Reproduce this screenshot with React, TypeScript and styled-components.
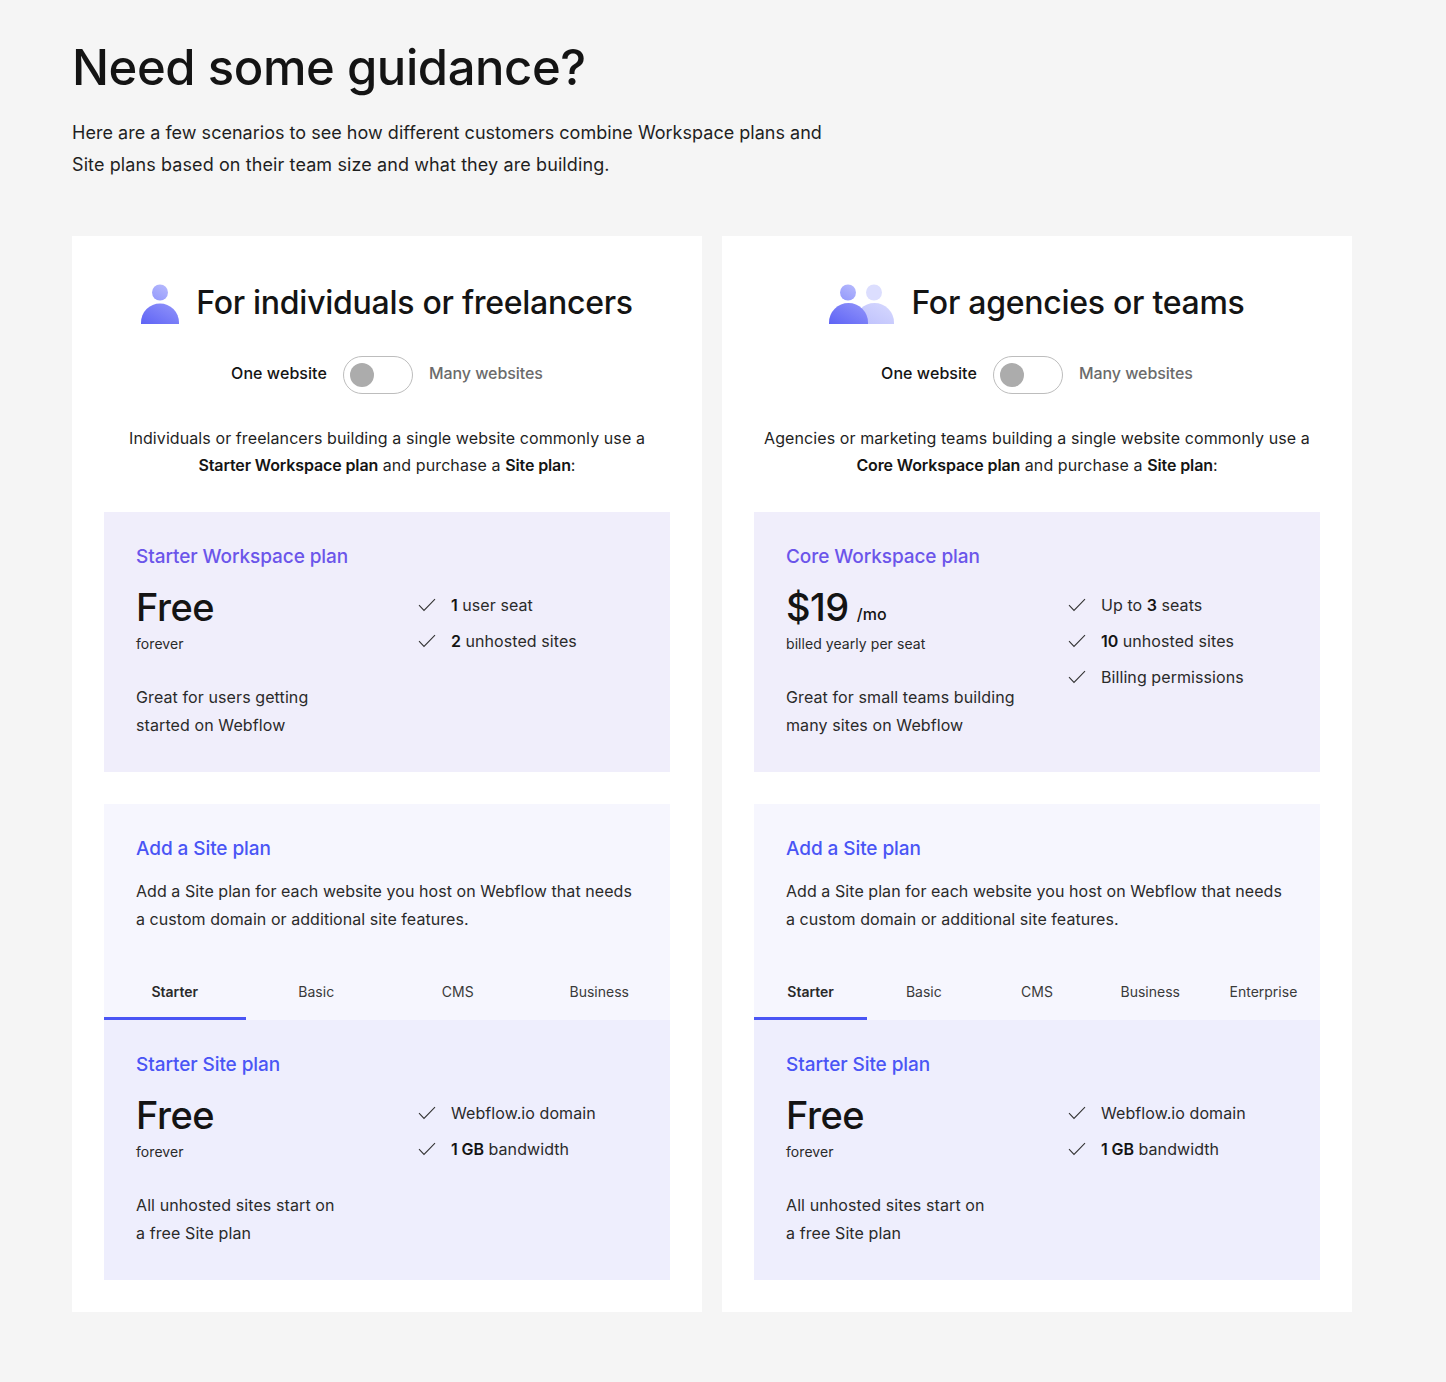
import React from 'react';
import styled, { createGlobalStyle } from 'styled-components';

const GlobalStyle = createGlobalStyle`
  html, body {
    margin: 0;
    padding: 0;
    background: #f5f5f5;
  }
  body {
    font-family: Inter, "Liberation Sans", sans-serif;
    color: #1a1a1a;
  }
`;

const Page = styled.div`
  width: 1446px;
  height: 1382px;
  box-sizing: border-box;
  padding: 37px 94px 0 72px;
`;

const Title = styled.h1`
  margin: 0;
  font-size: 49px;
  line-height: 62px;
  font-weight: 500;
  letter-spacing: -0.44px;
  color: #141414;
`;

const Intro = styled.p`
  margin: 18px 0 0;
  width: 770px;
  font-size: 18px;
  line-height: 32px;
  letter-spacing: 0.02px;
  color: #1f1f1f;
  span {
    letter-spacing: 0.1px;
  }
`;

const Columns = styled.div`
  display: grid;
  grid-template-columns: 630px 630px;
  gap: 20px;
  margin-top: 55px;
`;

const Card = styled.section`
  background: #fff;
  height: 1076px;
  box-sizing: border-box;
  padding: 40px 32px 32px;
`;

const CardHeader = styled.div`
  display: flex;
  justify-content: center;
  align-items: center;
  gap: 17px;
  height: 52px;
  svg {
    margin-top: 4px;
  }
`;

const CardTitle = styled.h2`
  margin: 2px 0 0;
  font-size: 32px;
  line-height: 52px;
  font-weight: 500;
  letter-spacing: -0.27px;
  color: #141414;
`;

const ToggleRow = styled.div`
  display: flex;
  justify-content: center;
  align-items: center;
  gap: 16px;
  margin-top: 28px;
  height: 38px;
`;

const ToggleLabel = styled.span<{ $active?: boolean }>`
  margin-top: -4px;
  font-size: 16px;
  line-height: 24px;
  font-weight: 500;
  letter-spacing: ${(p) => (p.$active ? '0.06px' : '-0.06px')};
  color: ${(p) => (p.$active ? '#141414' : '#6b6b6b')};
`;

const Toggle = styled.div`
  width: 70px;
  height: 38px;
  box-sizing: border-box;
  border: 1px solid #bdbdbd;
  border-radius: 19px;
  padding: 6px;
  background: #fff;
`;

const Knob = styled.div`
  width: 24px;
  height: 24px;
  border-radius: 50%;
  background: #acacac;
`;

const Lead = styled.p`
  margin: 31px 0 0;
  height: 54px;
  font-size: 16px;
  line-height: 27px;
  letter-spacing: 0.09px;
  text-align: center;
  color: #1f1f1f;
  b {
    font-weight: 600;
    letter-spacing: -0.12px;
    color: #141414;
  }
`;

const PlanBox = styled.div<{ $tone: 'violet' | 'blue' }>`
  height: 260px;
  box-sizing: border-box;
  padding: 32px 32px 0;
  background: ${(p) => (p.$tone === 'violet' ? '#f0eefb' : '#eeeefd')};
`;

const TopPlanBox = styled(PlanBox)`
  margin-top: 33px;
`;

const PlanName = styled.h3<{ $tone: 'violet' | 'blue' }>`
  margin: 0;
  font-size: 19px;
  line-height: 26px;
  font-weight: 500;
  letter-spacing: -0.08px;
  color: ${(p) => (p.$tone === 'violet' ? '#6b55ea' : '#4a55f5')};
`;

const PlanGrid = styled.div`
  display: grid;
  grid-template-columns: 282px 1fr;
  margin-top: 13px;
`;

const Price = styled.div`
  font-size: 38px;
  line-height: 48px;
  font-weight: 500;
  letter-spacing: -0.5px;
  color: #141414;
  small {
    margin-left: 8px;
    font-size: 16px;
    line-height: 0;
    letter-spacing: 0;
    font-weight: 500;
    vertical-align: 1px;
  }
`;

const PriceNote = styled.div`
  margin-top: 3px;
  font-size: 14px;
  line-height: 20px;
  letter-spacing: 0.06px;
  color: #2a2a2a;
`;

const Blurb = styled.p`
  margin: 29px 0 0;
  font-size: 16px;
  line-height: 28px;
  letter-spacing: 0.1px;
  color: #2a2a2a;
`;

const Features = styled.ul`
  list-style: none;
  margin: 0;
  padding: 4px 0 0;
`;

const Feature = styled.li`
  display: flex;
  align-items: center;
  gap: 15px;
  height: 36px;
  font-size: 16px;
  letter-spacing: 0.08px;
  color: #2a2a2a;
  b {
    font-weight: 600;
    letter-spacing: -0.1px;
    color: #141414;
  }
`;

const Tick = styled.svg`
  flex: none;
  width: 18px;
  height: 14px;
`;

const SiteBox = styled.div`
  margin-top: 32px;
  height: 216px;
  box-sizing: border-box;
  padding-top: 32px;
  background: #f6f6fe;
  display: flex;
  flex-direction: column;
`;

const SiteIntro = styled.div`
  padding: 0 32px;
`;

const SiteText = styled.p`
  margin: 15px 0 0;
  font-size: 16px;
  line-height: 28px;
  letter-spacing: 0.06px;
  color: #2a2a2a;
`;

const Tabs = styled.div`
  display: flex;
  margin-top: auto;
`;

const Tab = styled.div<{ $active?: boolean }>`
  flex: 1;
  height: 56px;
  box-sizing: border-box;
  padding-top: 18px;
  text-align: center;
  font-size: 14px;
  line-height: 20px;
  font-weight: ${(p) => (p.$active ? 600 : 400)};
  color: ${(p) => (p.$active ? '#2a2a2a' : '#3a3a3a')};
  border-bottom: 3px solid ${(p) => (p.$active ? '#4a55f5' : 'transparent')};
`;

const Check = () => (
  <Tick viewBox="0 0 18 14" fill="none">
    <path d="M1 7.2 L6 12.4 L17 1.2" stroke="#333" strokeWidth="1.1" />
  </Tick>
);

const PersonIcon = () => (
  <svg width="38" height="40" viewBox="0 0 38 40">
    <defs>
      <linearGradient id="solo-head" x1="0.2" y1="1" x2="0.8" y2="0">
        <stop offset="0" stopColor="#959bfb" />
        <stop offset="1" stopColor="#b5b8fd" />
      </linearGradient>
      <linearGradient id="solo-body" x1="0" y1="1" x2="1" y2="0">
        <stop offset="0" stopColor="#5e63f5" />
        <stop offset="1" stopColor="#9396fa" />
      </linearGradient>
    </defs>
    <circle cx="19" cy="8.5" r="8" fill="url(#solo-head)" />
    <path d="M0 40 V38.5 A19 19 0 0 1 38 38.5 V40 Z" fill="url(#solo-body)" />
  </svg>
);

const TeamIcon = () => (
  <svg width="65" height="40" viewBox="0 0 65 40">
    <defs>
      <linearGradient id="team-head" x1="0.2" y1="1" x2="0.8" y2="0">
        <stop offset="0" stopColor="#959bfb" />
        <stop offset="1" stopColor="#b5b8fd" />
      </linearGradient>
      <linearGradient id="team-body" x1="0" y1="1" x2="1" y2="0">
        <stop offset="0" stopColor="#5e63f5" />
        <stop offset="1" stopColor="#9396fa" />
      </linearGradient>
      <linearGradient id="team-back" x1="0" y1="1" x2="1" y2="0">
        <stop offset="0" stopColor="#bcbffc" />
        <stop offset="1" stopColor="#d7d9fe" />
      </linearGradient>
    </defs>
    <circle cx="45" cy="8.5" r="8" fill="#dcdefe" />
    <path d="M26 40 V38.5 A19 19 0 0 1 65 38.5 V40 Z" fill="url(#team-back)" />
    <circle cx="19" cy="8.5" r="8" fill="url(#team-head)" />
    <path d="M0 40 V38.5 A19 19 0 0 1 39 38.5 V40 Z" fill="url(#team-body)" />
  </svg>
);

type PlanProps = {
  tone: 'violet' | 'blue';
  name: string;
  price: React.ReactNode;
  note: string;
  blurb: React.ReactNode;
  features: React.ReactNode[];
};

const PlanBody = ({ tone, name, price, note, blurb, features }: PlanProps) => (
  <>
    <PlanName $tone={tone}>{name}</PlanName>
    <PlanGrid>
      <div>
        <Price>{price}</Price>
        <PriceNote>{note}</PriceNote>
        <Blurb>{blurb}</Blurb>
      </div>
      <Features>
        {features.map((f, i) => (
          <Feature key={i}>
            <Check />
            <span>{f}</span>
          </Feature>
        ))}
      </Features>
    </PlanGrid>
  </>
);

type ColumnProps = {
  icon: React.ReactNode;
  title: string;
  lead: React.ReactNode;
  plan: PlanProps;
  tabs: string[];
};

const Column = ({ icon, title, lead, plan, tabs }: ColumnProps) => (
  <Card>
    <CardHeader>
      {icon}
      <CardTitle>{title}</CardTitle>
    </CardHeader>
    <ToggleRow>
      <ToggleLabel $active>One website</ToggleLabel>
      <Toggle>
        <Knob />
      </Toggle>
      <ToggleLabel>Many websites</ToggleLabel>
    </ToggleRow>
    <Lead>{lead}</Lead>
    <TopPlanBox $tone="violet">
      <PlanBody {...plan} />
    </TopPlanBox>
    <SiteBox>
      <SiteIntro>
        <PlanName $tone="blue">Add a Site plan</PlanName>
        <SiteText>
          Add a Site plan for each website you host on Webflow that needs
          <br />a custom domain or additional site features.
        </SiteText>
      </SiteIntro>
      <Tabs>
        {tabs.map((t, i) => (
          <Tab key={t} $active={i === 0}>
            {t}
          </Tab>
        ))}
      </Tabs>
    </SiteBox>
    <PlanBox $tone="blue">
      <PlanBody
        tone="blue"
        name="Starter Site plan"
        price="Free"
        note="forever"
        blurb={
          <>
            All unhosted sites start on
            <br />a free Site plan
          </>
        }
        features={[
          'Webflow.io domain',
          <>
            <b>1 GB</b> bandwidth
          </>,
        ]}
      />
    </PlanBox>
  </Card>
);

export default function App() {
  return (
    <Page>
      <GlobalStyle />
      <Title>Need some guidance?</Title>
      <Intro>
        Here are a few scenarios to see how different customers combine Workspace plans and
        <br />
        <span>Site plans based on their team size and what they are building.</span>
      </Intro>
      <Columns>
        <Column
          icon={<PersonIcon />}
          title="For individuals or freelancers"
          lead={
            <>
              Individuals or freelancers building a single website commonly use a
              <br />
              <b>Starter Workspace plan</b> and purchase a <b>Site plan</b>:
            </>
          }
          plan={{
            tone: 'violet',
            name: 'Starter Workspace plan',
            price: 'Free',
            note: 'forever',
            blurb: (
              <>
                Great for users getting
                <br />
                started on Webflow
              </>
            ),
            features: [
              <>
                <b>1</b> user seat
              </>,
              <>
                <b>2</b> unhosted sites
              </>,
            ],
          }}
          tabs={['Starter', 'Basic', 'CMS', 'Business']}
        />
        <Column
          icon={<TeamIcon />}
          title="For agencies or teams"
          lead={
            <>
              Agencies or marketing teams building a single website commonly use a
              <br />
              <b>Core Workspace plan</b> and purchase a <b>Site plan</b>:
            </>
          }
          plan={{
            tone: 'violet',
            name: 'Core Workspace plan',
            price: (
              <>
                $19<small>/mo</small>
              </>
            ),
            note: 'billed yearly per seat',
            blurb: (
              <>
                Great for small teams building
                <br />
                many sites on Webflow
              </>
            ),
            features: [
              <>
                Up to <b>3</b> seats
              </>,
              <>
                <b>10</b> unhosted sites
              </>,
              'Billing permissions',
            ],
          }}
          tabs={['Starter', 'Basic', 'CMS', 'Business', 'Enterprise']}
        />
      </Columns>
    </Page>
  );
}
